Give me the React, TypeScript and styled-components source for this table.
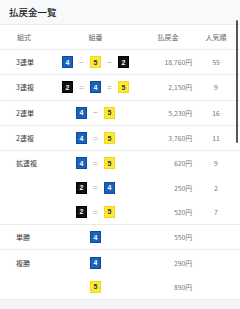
import React from 'react';
import styled, { createGlobalStyle } from 'styled-components';

type Color = 'blue' | 'yellow' | 'black';
type Combo = { nums: { n: number; c: Color }[]; sep: '−' | '=' };

interface Line {
  combo: Combo;
  amount: string;
  rank?: string;
}

interface Group {
  label: string;
  lines: Line[];
}

const B = (n: number): { n: number; c: Color } => ({ n, c: 'blue' });
const Y = (n: number): { n: number; c: Color } => ({ n, c: 'yellow' });
const K = (n: number): { n: number; c: Color } => ({ n, c: 'black' });

const groups: Group[] = [
  { label: '3連単', lines: [{ combo: { nums: [B(4), Y(5), K(2)], sep: '−' }, amount: '18,760円', rank: '55' }] },
  { label: '3連複', lines: [{ combo: { nums: [K(2), B(4), Y(5)], sep: '=' }, amount: '2,150円', rank: '9' }] },
  { label: '2連単', lines: [{ combo: { nums: [B(4), Y(5)], sep: '−' }, amount: '5,230円', rank: '16' }] },
  { label: '2連複', lines: [{ combo: { nums: [B(4), Y(5)], sep: '=' }, amount: '3,760円', rank: '11' }] },
  {
    label: '拡連複',
    lines: [
      { combo: { nums: [B(4), Y(5)], sep: '=' }, amount: '620円', rank: '9' },
      { combo: { nums: [K(2), B(4)], sep: '=' }, amount: '250円', rank: '2' },
      { combo: { nums: [K(2), Y(5)], sep: '=' }, amount: '520円', rank: '7' },
    ],
  },
  { label: '単勝', lines: [{ combo: { nums: [B(4)], sep: '=' }, amount: '550円' }] },
  {
    label: '複勝',
    lines: [
      { combo: { nums: [B(4)], sep: '=' }, amount: '290円' },
      { combo: { nums: [Y(5)], sep: '=' }, amount: '890円' },
    ],
  },
];

const GlobalStyle = createGlobalStyle`
  body {
    margin: 0;
    background: #ffffff;
    font-family: "Noto Sans CJK JP", "Noto Sans", sans-serif;
  }
`;

export default function App() {
  return (
    <>
      <GlobalStyle />
      <Page>
        <Title>払戻金一覧</Title>
        <HeaderRow>
          <HeadCell $align='left'>組式</HeadCell>
          <HeadCell>組番</HeadCell>
          <HeadCell>払戻金</HeadCell>
          <HeadCell>人気順</HeadCell>
        </HeaderRow>
        {groups.map((g) => (
          <GroupBox key={g.label}>
            {g.lines.map((l, i) => (
              <Row key={i}>
                <Label>{i === 0 ? g.label : ''}</Label>
                <ComboCell>
                  {l.combo.nums.map((x, j) => (
                    <React.Fragment key={j}>
                      {j > 0 && <Sep>{l.combo.sep}</Sep>}
                      <NumBox $c={x.c}>{x.n}</NumBox>
                    </React.Fragment>
                  ))}
                </ComboCell>
                <Amount>{l.amount}</Amount>
                <Rank>{l.rank ?? ''}</Rank>
              </Row>
            ))}
          </GroupBox>
        ))}
        <Footer />
        <ScrollThumb />
      </Page>
    </>
  );
}

const Page = styled.div`
  position: relative;
  width: 240px;
  height: 309px;
  overflow: hidden;
  background: #fff;
`;

const Title = styled.div`
  height: 24px;
  padding-left: 9px;
  display: flex;
  align-items: center;
  background: #f8f9fb;
  border-bottom: 1px solid #e8eaef;
  color: #222;
  font-size: 9.5px;
  font-weight: 500;
`;

const grid = `
  display: grid;
  grid-template-columns: 60px 71px 74px 22px;
  align-items: center;
`;

const HeaderRow = styled.div`
  ${grid}
  height: 24px;
  border-bottom: 1px solid #ebecf0;
`;

const HeadCell = styled.div<{ $align?: 'left' }>`
  color: #666;
  font-size: 7px;
  text-align: ${(p) => (p.$align === 'left' ? 'left' : 'center')};
  padding-left: ${(p) => (p.$align === 'left' ? '17px' : '0')};
`;

const GroupBox = styled.div`
  border-bottom: 1px solid #ebecf0;
`;

const Row = styled.div`
  ${grid}
  height: 24.3px;
`;

const Label = styled.div`
  padding-left: 16px;
  color: #333;
  font-size: 7px;
`;

const ComboCell = styled.div`
  display: flex;
  justify-content: center;
  align-items: center;
`;

const colors: Record<Color, { bg: string; fg: string; bd: string }> = {
  blue: { bg: '#1a62bd', fg: '#fff', bd: '#0c4a9a' },
  yellow: { bg: '#fbe83a', fg: '#333', bd: '#f3d91a' },
  black: { bg: '#111', fg: '#fff', bd: '#000' },
};

const NumBox = styled.div<{ $c: Color }>`
  box-sizing: border-box;
  width: 11px;
  height: 12px;
  display: flex;
  align-items: center;
  justify-content: center;
  background: ${(p) => colors[p.$c].bg};
  color: ${(p) => colors[p.$c].fg};
  border: 1px solid ${(p) => colors[p.$c].bd};
  font-family: "Liberation Sans", sans-serif;
  font-size: 7px;
  font-weight: 700;
`;

const Sep = styled.div`
  width: 17px;
  text-align: center;
  color: #a8a8a8;
  font-family: "Liberation Sans", sans-serif;
  font-size: 8.5px;
  line-height: 1;
`;

const Amount = styled.div`
  text-align: right;
  padding-right: 13px;
  color: #777;
  font-size: 6.8px;
`;

const Rank = styled.div`
  text-align: center;
  color: #777;
  font-size: 6.8px;
`;

const Footer = styled.div`
  height: 20px;
  background: #f4f5f9;
`;

const ScrollThumb = styled.div`
  position: absolute;
  right: 2px;
  top: 20px;
  width: 2px;
  height: 123px;
  border-radius: 1px;
  background: #555;
`;
